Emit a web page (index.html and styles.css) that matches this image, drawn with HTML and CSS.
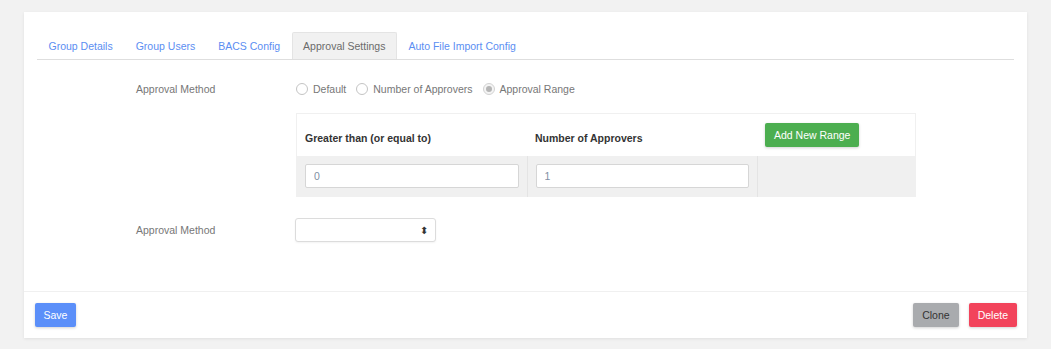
FILE: index.html
```html
<!DOCTYPE html>
<html>
  <head>
    <meta charset="utf-8" />
    <title>Group Settings</title>
    <link rel="stylesheet" href="styles.css">
  </head>
  <body>
    <div class="card">
      <div class="card-body">
        <ul class="tabs">
          <li class="tab"><a href="#">Group Details</a></li>
          <li class="tab"><a href="#">Group Users</a></li>
          <li class="tab"><a href="#">BACS Config</a></li>
          <li class="tab active"><a href="#">Approval Settings</a></li>
          <li class="tab"><a href="#">Auto File Import Config</a></li>
        </ul>

        <div class="form-row radio-row">
          <label class="form-label">Approval Method</label>
          <div class="radio-group">
            <label class="radio"><input type="radio" name="method"> Default</label>
            <label class="radio"><input type="radio" name="method"> Number of Approvers</label>
            <label class="radio"><input type="radio" name="method" checked disabled> Approval Range</label>
          </div>
        </div>

        <div class="form-row table-row">
          <div class="form-label"></div>
          <table class="range-table">
            <thead>
              <tr>
                <th class="col-from">Greater than (or equal to)</th>
                <th class="col-count">Number of Approvers</th>
                <th class="col-action"><button class="btn btn-success">Add New Range</button></th>
              </tr>
            </thead>
            <tbody>
              <tr>
                <td><input type="text" class="form-input" value="0"></td>
                <td><input type="text" class="form-input" value="1"></td>
                <td></td>
              </tr>
            </tbody>
          </table>
        </div>

        <div class="form-row select-row">
          <label class="form-label">Approval Method</label>
          <div class="select">
            <span class="select-arrow">&#x2B0D;</span>
          </div>
        </div>
      </div>

      <div class="card-footer">
        <button class="btn btn-primary">Save</button>
        <div class="footer-right">
          <button class="btn btn-grey">Clone</button>
          <button class="btn btn-danger">Delete</button>
        </div>
      </div>
    </div>
  </body>
</html>
```

FILE: styles.css
```css
body {
  margin: 0;
  padding: 12px 24px 11px 24px;
  background: #f2f2f2;
  font-family: "Liberation Sans", Arial, sans-serif;
  font-size: 10.5px;
  color: #777;
}
.card {
  background: #FFFFFF;
  box-shadow: 0 1px 3px rgba(0,0,0,0.08);
}
.card-body {
  padding: 20px 13px 0 13px;
  height: 279px;
  box-sizing: border-box;
}
/* Tabs */
.tabs {
  list-style: none;
  margin: 0;
  padding: 0;
  display: flex;
  border-bottom: 1px solid #dedede;
}
.tab a {
  display: block;
  height: 25px;
  line-height: 25px;
  padding: 1px 10.5px 0 10.5px;
  color: #5b8ef2;
  text-decoration: none;
  border: 1px solid transparent;
  border-bottom: none;
  border-radius: 2px 2px 0 0;
}
.tab.active a {
  background: #f1f1f1;
  border-color: #e4e4e4;
  color: #6b6b6b;
}
/* Form rows */
.form-row {
  display: flex;
  align-items: center;
  padding-left: 99px;
}
.form-label {
  width: 160px;
  flex-shrink: 0;
  color: #777;
}
.radio-row {
  height: 28px;
  margin-top: 15px;
}
.radio-group {
  display: flex;
  gap: 10px;
}
.radio {
  display: flex;
  align-items: center;
  gap: 5px;
  color: #777;
}
.radio input {
  appearance: none;
  -webkit-appearance: none;
  margin: 0;
  width: 12px;
  height: 12px;
  border: 1px solid #c4c4c4;
  border-radius: 50%;
  background: #fff;
  box-sizing: border-box;
  position: relative;
}
.radio input:checked {
  background: #f4f4f4;
  border-color: #d2d2d2;
}
.radio input:checked::after {
  content: "";
  position: absolute;
  left: 2px;
  top: 2px;
  width: 6px;
  height: 6px;
  border-radius: 50%;
  background: #b5b5b5;
}
/* Range table */
.table-row {
  margin-top: 10px;
  align-items: flex-start;
}
.range-table {
  width: 620px;
  border-collapse: collapse;
  border: 1px solid #f0f0f0;
}
.range-table th {
  text-align: left;
  font-weight: bold;
  color: #333;
  line-height: 18px;
  padding: 9px 8px;
  vertical-align: bottom;
  height: 23px;
}
.range-table .col-from { width: 214px; }
.range-table .col-count { width: 214px; }
.range-table td {
  background: #f0f0f0;
  padding: 8px;
  border-left: 1px solid #e4e4e4;
  height: 24px;
}
.range-table td:first-child {
  border-left: none;
}
.form-input {
  display: block;
  width: 100%;
  height: 24px;
  box-sizing: border-box;
  border: 1px solid #d6d6d6;
  border-radius: 2px;
  padding: 0 8px;
  font-family: inherit;
  font-size: 10.5px;
  color: #7f8fa3;
  background: #fff;
}
/* Select */
.select-row {
  margin-top: 21px;
}
.select {
  width: 141px;
  height: 24px;
  box-sizing: border-box;
  border: 1px solid #dcdcdc;
  border-radius: 3px;
  background: #fff;
  box-shadow: 0 1px 2px rgba(0,0,0,0.05);
  display: flex;
  align-items: center;
  justify-content: flex-end;
  padding-right: 7px;
  margin-left: -1px;
}
.select-arrow {
  font-size: 10px;
  color: #333;
}
/* Buttons */
.btn {
  border: none;
  border-radius: 2px;
  height: 24px;
  padding: 0 9px;
  font-family: inherit;
  font-size: 10.5px;
  cursor: pointer;
  box-shadow: 0 1px 3px rgba(0,0,0,0.18);
}
.btn-success {
  background: #4cae50;
  color: #fff;
}
.btn-primary {
  background: #5b8ff9;
  color: #fff;
  padding: 0 8.5px;
}
.btn-grey {
  background: #a9abae;
  color: #333;
}
.btn-danger {
  background: #f2435b;
  color: #fff;
  margin-left: 10px;
}
.card-footer {
  display: flex;
  justify-content: space-between;
  align-items: center;
  border-top: 1px solid #f0f0f0;
  padding: 11px 10px 11px 11px;
}
.footer-right {
  display: flex;
}
```
